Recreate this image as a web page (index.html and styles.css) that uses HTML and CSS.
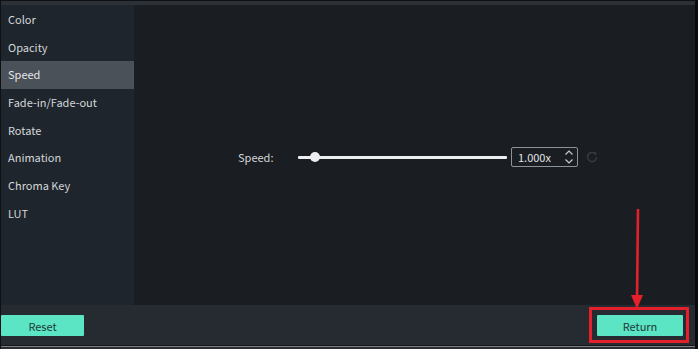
FILE: index.html
```html
<!DOCTYPE html>
<html>
<head>
<meta charset="utf-8">
<link rel="stylesheet" href="styles.css">
</head>
<body>
<div class="app">
  <div class="topbar"></div>
  <div class="middle">
    <ul class="sidebar">
      <li class="item">Color</li>
      <li class="item">Opacity</li>
      <li class="item active">Speed</li>
      <li class="item">Fade-in/Fade-out</li>
      <li class="item">Rotate</li>
      <li class="item">Animation</li>
      <li class="item">Chroma Key</li>
      <li class="item">LUT</li>
    </ul>
    <div class="main">
      <div class="speed-row">
        <span class="label">Speed:</span>
        <div class="slider"><div class="track"></div><div class="knob"></div></div>
        <div class="numbox">
          <span class="val">1.000x</span>
          <svg class="spin" width="10" height="16" viewBox="0 0 10 16"><path d="M1.5 5.5 L5 2 L8.5 5.5 M1.5 10.5 L5 14 L8.5 10.5" fill="none" stroke="#c8ccd0" stroke-width="1.2"/></svg>
        </div>
        <svg class="reset-ico" width="14" height="14" viewBox="0 0 14 14"><path d="M11.5 7 A4.5 4.5 0 1 1 9.8 3.5" fill="none" stroke="#353a41" stroke-width="1.6"/><path d="M8 1.5 L11.5 2.5 L10.5 6 Z" fill="#353a41"/></svg>
      </div>
    </div>
  </div>
  <div class="bottombar">
    <button class="btn reset">Reset</button>
    <div class="highlight-box"><button class="btn">Return</button></div>
  </div>
  <div class="bottomline"></div>
  <svg class="arrow" width="20" height="104" viewBox="0 0 20 104"><path d="M11 0 L10 92" stroke="#e3202b" stroke-width="2.6" fill="none"/><path d="M4 86 L10 100 L16 86 Z" fill="#e3202b"/></svg>
</div>
</body>
</html>
```
FILE: styles.css
```css
html, body { margin: 0; padding: 0; background: #111; }
.app {
  position: relative;
  width: 698px; height: 349px;
  box-sizing: border-box;
  border-left: 1px solid #0e1012;
  border-right: 3px solid #0a0b0c;
  border-top: 1px solid #0e1012;
  background: #1a1d21;
  display: flex; flex-direction: column;
  font-family: "Noto Sans CJK SC", "Open Sans", sans-serif;
  overflow: hidden;
}
.topbar { height: 4px; background: #2b3137; flex: none; }
.middle { height: 300px; display: flex; flex: none; }
.sidebar {
  list-style: none; margin: 0; padding: 1px 0 0 0;
  width: 133px; background: #1f252c; flex: none;
}
.item {
  height: 27.7px; line-height: 27.7px;
  padding-left: 7px;
  font-size: 11px; color: #d4d7da;
}
.item.active { background: #4b5158; color: #e4e6e8; }
.main { flex: 1; display: flex; align-items: center; justify-content: center; background: #1a1d21; }
.speed-row { display: flex; align-items: center; margin-left: 8px; margin-top: 4px; }
.label { font-size: 11px; color: #d4d7da; width: 60px; }
.slider { position: relative; width: 209px; height: 12px; margin-right: 4px; }
.track { position: absolute; left: 0; right: 0; top: 5px; height: 3px; background: #eceeef; border-radius: 1px; }
.knob { position: absolute; left: 12px; top: 1px; width: 10px; height: 10px; border-radius: 50%; background: #eceeef; }
.numbox {
  width: 67px; height: 20px; box-sizing: border-box;
  border: 1px solid #8d9298; border-radius: 2px;
  display: flex; align-items: center; justify-content: space-between;
  padding: 0 3px 0 6px;
}
.val { font-size: 11px; color: #e0e2e4; }
.reset-ico { margin-left: 7px; }
.bottombar {
  height: 40px; background: #262b31; flex: none;
  display: flex; align-items: center; justify-content: space-between;
  padding-right: 6px;
}
.btn {
  width: 86px; height: 21px; border: none; border-radius: 1px;
  background: #5be5c5; color: #1f3a35;
  font-family: "Noto Sans CJK SC", "Open Sans", sans-serif;
  font-size: 11px; padding: 0; margin: 0;
}
.btn.reset { width: 83px; margin-top: 1px; }
.highlight-box {
  display: flex;
  border: 3px solid #e3202b; padding: 5px 3px 4px 5px;
  margin-top: 0px;
}
.bottomline { height: 4px; background: #2a2e33; border-top: 1px solid #16181b; box-shadow: inset 0 1px 0 #7d7f82; flex: none; }
.arrow { position: absolute; left: 626px; top: 208px; }
```
